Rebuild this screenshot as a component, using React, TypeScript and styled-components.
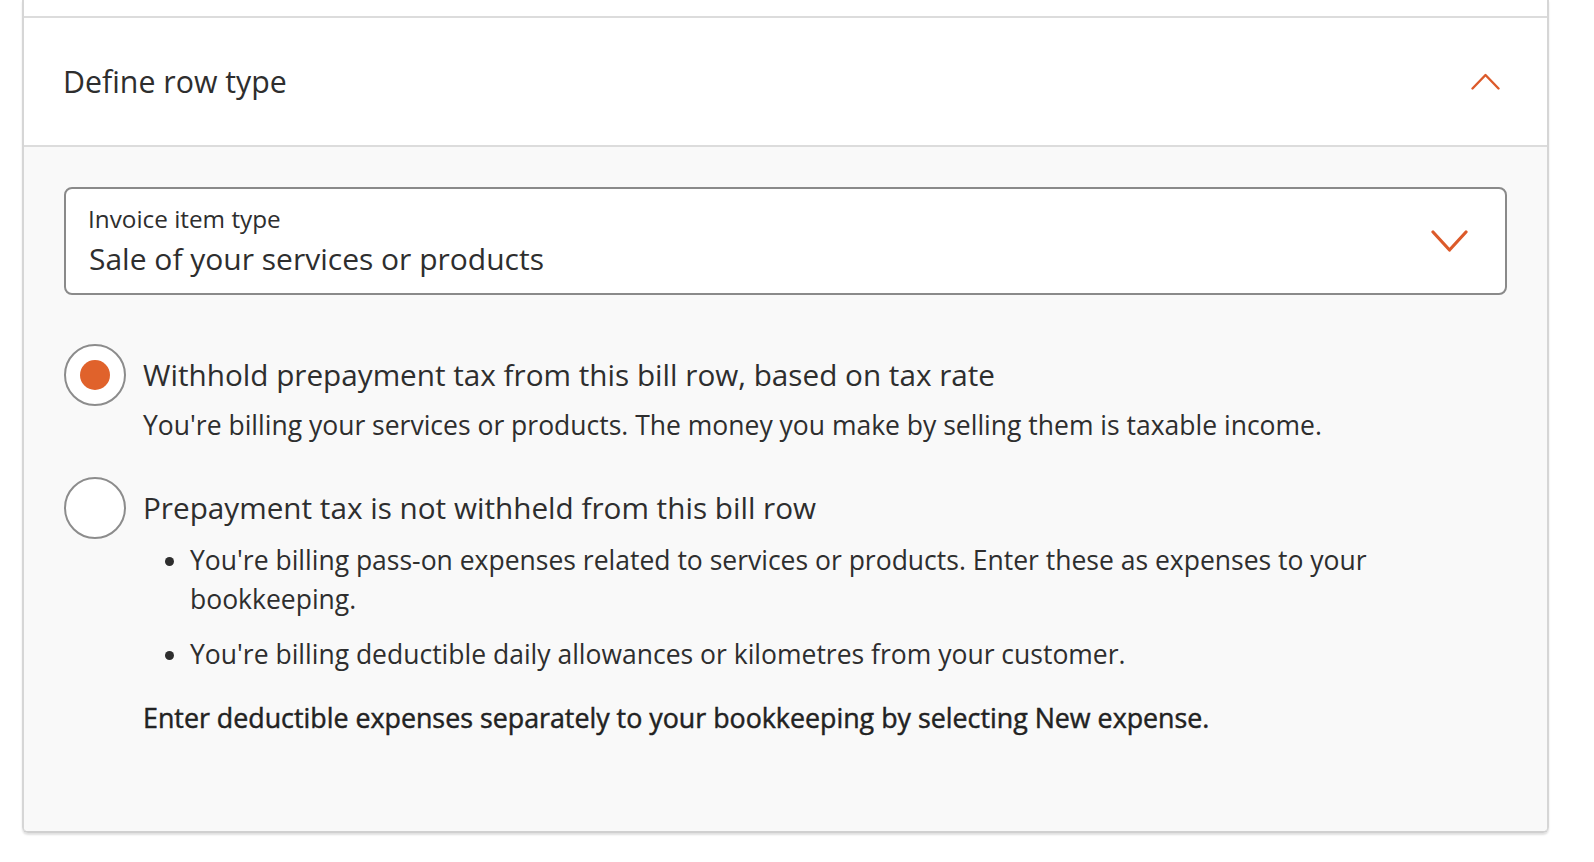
import styled, { createGlobalStyle } from 'styled-components';

const GlobalStyle = createGlobalStyle`
  html, body {
    margin: 0;
    padding: 0;
    background: #ffffff;
    font-family: "Open Sans", "Noto Sans", "Liberation Sans", sans-serif;
    color: #2e2e2e;
  }
`;

const Page = styled.div`
  width: 1594px;
  height: 862px;
  overflow: hidden;
  padding-left: 22px;
  box-sizing: border-box;
`;

const Card = styled.div`
  width: 1527px;
  border-left: 2px solid #d6d6d6;
  border-right: 2px solid #d6d6d6;
  border-bottom: 2px solid #d0d0d0;
  border-radius: 0 0 6px 6px;
  box-shadow: 0 2px 2px rgba(0, 0, 0, 0.12);
  box-sizing: border-box;
  overflow: hidden;
`;

const PrevSection = styled.div`
  height: 16px;
  background: #ffffff;
  border-bottom: 2px solid #dcdcdc;
`;

const Header = styled.div`
  height: 127px;
  display: flex;
  align-items: center;
  justify-content: space-between;
  padding: 0 47px 0 39px;
  background: #ffffff;
  border-bottom: 2px solid #dcdcdc;
`;

const Title = styled.h2`
  margin: 0;
  font-size: 30.3px;
  font-weight: 400;
`;

const Body = styled.div`
  background: #f9f9f9;
  padding: 40px 40px 94px 40px;
`;

const SelectBox = styled.div`
  height: 108px;
  box-sizing: border-box;
  background: #ffffff;
  border: 2px solid #8a8a8a;
  border-radius: 8px;
  display: flex;
  align-items: center;
  justify-content: space-between;
  padding: 0 37px 0 22px;
`;

const SelectTexts = styled.div`
  display: flex;
  flex-direction: column;
  gap: 6px;
`;

const SelectLabel = styled.span`
  font-size: 24.3px;
  line-height: 30px;
`;

const SelectValue = styled.span`
  font-size: 30px;
  line-height: 38px;
  padding-left: 1px;
`;

const Options = styled.div`
  display: flex;
  flex-direction: column;
  gap: 32px;
  margin-top: 49px;
`;

const Option = styled.div`
  display: grid;
  grid-template-columns: 62px 1fr;
  column-gap: 17px;
  align-items: start;
`;

const Radio = styled.span<{ $checked?: boolean }>`
  width: 62px;
  height: 62px;
  box-sizing: border-box;
  border-radius: 50%;
  border: 2px solid #8c8c8c;
  background: #ffffff;
  display: flex;
  align-items: center;
  justify-content: center;

  &::after {
    content: '';
    width: 30px;
    height: 30px;
    border-radius: 50%;
    background: ${({ $checked }) => ($checked ? '#e0622b' : 'transparent')};
  }
`;

const OptionText = styled.div`
  display: flex;
  flex-direction: column;
`;

const OptionLabel = styled.div`
  font-size: 29.7px;
  line-height: 62px;
`;

const Description = styled.p`
  margin: 0;
  font-size: 26.5px;
  line-height: 39px;
`;

const BulletList = styled.ul`
  margin: 2px 0 0;
  padding-left: 47px;
  font-size: 26.5px;
  line-height: 39px;

  li {
    margin-bottom: 16px;
  }

  li:last-child {
    margin-bottom: 0;
  }
`;

const Note = styled.p`
  margin: 24px 0 0;
  font-size: 26.8px;
  line-height: 39px;
  font-weight: 400;
  color: #222222;
  -webkit-text-stroke: 0.45px #222222;
`;

const ChevronUp = () => (
  <svg width={29} height={17} viewBox="0 0 29 17" fill="none">
    <path d="M1.5 15.5 L14.5 2 L27.5 15.5" stroke="#dc5a2a" strokeWidth={2.4} strokeLinecap="round" strokeLinejoin="round" />
  </svg>
);

const ChevronDown = () => (
  <svg width={37} height={25} viewBox="0 0 37 25" fill="none">
    <path d="M2 3 L18.5 21 L35 3" stroke="#dc5a2a" strokeWidth={3.2} strokeLinecap="round" strokeLinejoin="round" />
  </svg>
);

export default function App() {
  return (
    <Page>
      <GlobalStyle />
      <Card>
        <PrevSection />
        <Header>
          <Title>Define row type</Title>
          <ChevronUp />
        </Header>
        <Body>
          <SelectBox>
            <SelectTexts>
              <SelectLabel>Invoice item type</SelectLabel>
              <SelectValue>Sale of your services or products</SelectValue>
            </SelectTexts>
            <ChevronDown />
          </SelectBox>
          <Options>
            <Option>
              <Radio $checked />
              <OptionText>
                <OptionLabel>Withhold prepayment tax from this bill row, based on tax rate</OptionLabel>
                <Description>
                  You're billing your services or products. The money you make by selling them is taxable income.
                </Description>
              </OptionText>
            </Option>
            <Option>
              <Radio />
              <OptionText>
                <OptionLabel>Prepayment tax is not withheld from this bill row</OptionLabel>
                <BulletList>
                  <li>
                    You're billing pass-on expenses related to services or products. Enter these as expenses to your
                    bookkeeping.
                  </li>
                  <li>You're billing deductible daily allowances or kilometres from your customer.</li>
                </BulletList>
                <Note>Enter deductible expenses separately to your bookkeeping by selecting New expense.</Note>
              </OptionText>
            </Option>
          </Options>
        </Body>
      </Card>
    </Page>
  );
}
